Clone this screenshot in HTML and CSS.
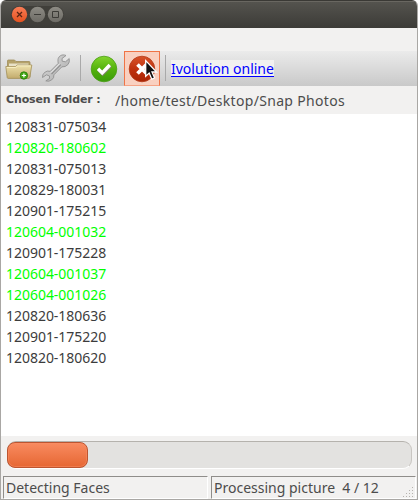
FILE: index.html
```html
<!DOCTYPE html>
<html lang="en">
<head>
<meta charset="utf-8">
<title>Ivolution</title>
<link rel="stylesheet" href="styles.css">
</head>
<body>
<div class="window">
  <header class="titlebar">
    <svg width="56" height="20" viewBox="0 0 56 20">
      <defs>
        <linearGradient id="close" x2="0" y2="1"><stop stop-color="#f97c56"/><stop offset="1" stop-color="#e4521f"/></linearGradient>
        <linearGradient id="gray" x2="0" y2="1"><stop stop-color="#8d8b84"/><stop offset="1" stop-color="#6d6b65"/></linearGradient>
      </defs>
      <rect x=".5" y="1" width="53.500" height="17.500" rx="8.700" fill="#403f3a"/>
      <circle cx="9.500" cy="9.500" r="7.700" fill="url(#close)"/>
      <circle cx="27.500" cy="9.500" r="7.700" fill="url(#gray)"/>
      <circle cx="45.500" cy="9.500" r="7.700" fill="url(#gray)"/>
      <path d="M7 7l5 5M12 7l-5 5" stroke="#5b2413" stroke-width="1.300"/>
      <path d="M24 9.500h7M42.500 6.500h6v6h-6z" stroke="#3c3b37" fill="none"/>
    </svg>
  </header>
  <div class="menubar"></div>
  <nav class="toolbar">
    <svg class="folder" width="28" height="24" viewBox="0 0 28 24">
      <defs>
        <linearGradient id="fold" x2="0" y2="1"><stop stop-color="#efe2ac"/><stop offset="1" stop-color="#c2ab6d"/></linearGradient>
      </defs>
      <path d="M2.500 19V2.800q0-.8.800-.8H9.500l1.500 1.500h13q1 0 1 1V19z" fill="#b5a26a" stroke="#a08e5a" stroke-width=".8"/>
      <path d="M4 5.500h19.500v3H4z" fill="#e9e2c8"/>
      <path d="M.8 8.500h9.700l1.800-1.500h14.500l-2 12.500q-.2.900-1 .9H3.200q-.8 0-1-.9z" fill="url(#fold)" stroke="#a28f58" stroke-width=".8"/>
      <path d="M1.800 9.400h9l1.900-1.500h13" fill="none" stroke="#fbf3cb" stroke-width=".9"/>
      <circle cx="18.900" cy="17.500" r="3.700" fill="#43a915" stroke="#267806" stroke-width=".8"/>
      <path d="M18.900 15.400v4.200M16.800 17.500h4.200" stroke="#fff" stroke-width="1.200"/>
    </svg>
    <svg class="wrench" width="30" height="30" viewBox="0 0 30 30">
      <defs>
        <linearGradient id="steel" x2="1" y2="1"><stop stop-color="#dedede"/><stop offset="1" stop-color="#a8a8a8"/></linearGradient>
      </defs>
      <path d="M25 2.500C21 .8 17.500 3 17 6.500Q16.800 9 17.300 10.300L9.300 18.300Q6 17.300 3.500 19.500 1.200 21.700 1.500 24.500L5.500 21.800 8.500 23 8.500 25.500 4.800 27.900Q8 29 10.800 26.800 13.200 25 12.900 21.800L20.800 13.900Q24.500 14.300 27 11.500 29 9 28.200 5.600L24.500 8.800 21.200 8.200 21 5.500z" fill="url(#steel)" stroke="#919191" stroke-width=".9" stroke-linejoin="round"/>
      <path d="M10.500 21l9.300-9.400" stroke="#8f8f8f" stroke-width="1.200"/>
      <path d="M9.900 19.600l8.800-8.900" stroke="#ededed" stroke-width="1"/>
    </svg>
    <i class="separator first"></i>
    <svg class="apply" width="28" height="28" viewBox="0 0 28 28">
      <defs>
        <linearGradient id="green" x2="0" y2="1"><stop stop-color="#82d42c"/><stop offset=".5" stop-color="#54b20d"/><stop offset="1" stop-color="#3b9b0a"/></linearGradient>
      </defs>
      <circle cx="14" cy="14" r="12.800" fill="url(#green)" stroke="#4b9e17" stroke-width=".8"/>
      <path d="M8 14l4.200 4.200L20 10.200" fill="none" stroke="#a66bb4" stroke-width="3.400" transform="translate(.5 .7)" opacity=".6"/>
      <path d="M8 13.700l4.200 4.200L19.800 10" fill="none" stroke="#fff" stroke-width="3.400"/>
    </svg>
    <div class="stop">
      <svg width="34" height="34" viewBox="0 0 34 34">
        <defs>
          <linearGradient id="red" x2="0" y2="1"><stop stop-color="#d8532a"/><stop offset=".5" stop-color="#bf310d"/><stop offset="1" stop-color="#a92506"/></linearGradient>
        </defs>
        <circle cx="17" cy="17" r="12.800" fill="url(#red)" stroke="#b53a18" stroke-width=".8"/>
        <path d="M12.500 12.500l9 9M21.500 12.500l-9 9" stroke="#fff" stroke-width="3.700"/>
        <path d="M20.700 8.600V24.300L24.200 21l2.600 6.200 2.800-1.200-2.600-6h4.600z" fill="#111" stroke="#fff" stroke-width="1.300"/>
      </svg>
    </div>
    <i class="separator second"></i>
    <a class="link" href="#">Ivolution online</a>
  </nav>
  <div class="chosen"><b>Chosen Folder :</b><span>/home/test/Desktop/Snap Photos</span></div>
  <ul class="list">
    <li>120831-075034</li>
    <li class="found">120820-180602</li>
    <li>120831-075013</li>
    <li>120829-180031</li>
    <li>120901-175215</li>
    <li class="found">120604-001032</li>
    <li>120901-175228</li>
    <li class="found">120604-001037</li>
    <li class="found">120604-001026</li>
    <li>120820-180636</li>
    <li>120901-175220</li>
    <li>120820-180620</li>
  </ul>
  <div class="progress"><div class="trough"><div class="bar"></div></div></div>
  <footer class="status">
    <div class="pane task">Detecting Faces</div>
    <div class="pane count"><span>Processing picture&nbsp; 4 / 12</span>
      <svg width="11" height="11" viewBox="0 0 11 11"><path d="M9 1.500h1M6 4.500h1M9 4.500h1M3 7.500h1M6 7.500h1M9 7.500h1M0 10.500h1M3 10.500h1M6 10.500h1M9 10.500h1" stroke="#b5b2ae"/></svg>
    </div>
  </footer>
</div>
</body>
</html>
```

FILE: styles.css
```css
* { box-sizing: border-box; }
body {
  margin: 0;
  background: #fff;
  font: 14px/21px "Noto Sans", sans-serif;
  color: #4c4c4c;
}
.window {
  width: 418px;
  height: 500px;
  display: flex;
  flex-direction: column;
  border: 1px solid #a9a7a4;
  border-top: 0;
  border-radius: 6px 6px 0 0;
  background: #f2f1f0;
  overflow: hidden;
}
.titlebar {
  height: 28px;
  margin: 0 -1px;
  padding: 5px 0 0 10px;
  background: linear-gradient(#55544f, #3c3b37);
  border-top: 1px solid #3a3935;
  box-shadow: inset 0 1px #696761;
}
.titlebar svg { display: block; margin-top: -1px; }
.menubar { height: 23px; }
.toolbar {
  height: 35px;
  display: flex;
  align-items: flex-start;
  background: linear-gradient(#ebebeb, #c9c9c9);
}
.toolbar svg { display: block; flex: none; }
.folder { margin: 7px 0 0 4px; }
.wrench { margin: 2px 0 0 8px; }
.separator { width: 1px; height: 26px; margin-top: 4px; background: #a9a9a9; }
.first { margin-left: 9px; }
.apply { margin: 4px 0 0 9px; }
.stop {
  width: 36px;
  height: 35px;
  margin-left: 6px;
  border: 1px solid #ef7446;
  border-bottom-color: #f5a486;
  background: #f9d0c0;
}
.second { margin-left: 5px; }
.link {
  height: 17px;
  margin: 9px 0 0 5px;
  line-height: 17px;
  background: #f2f1f0;
  color: #00f;
  text-decoration: none;
  border-bottom: 1px solid #00f;
}
.chosen {
  height: 28px;
  display: flex;
  align-items: flex-start;
  padding-left: 5px;
}
.chosen b { width: 109px; font: bold 11px/28px "DejaVu Sans", sans-serif; letter-spacing: -.13px; }
.chosen span { line-height: 30px; height: 28px; letter-spacing: .32px; }
.list {
  height: 322px;
  margin: 0;
  padding: 2px 5px 0;
  background: #fff;
  color: #3c3c3c;
  letter-spacing: -.03px;
  list-style: none;
}
.list li { height: 21px; }
.list .found { color: #0f0; }
.progress { height: 40px; padding: 5px 5px 0 6px; }
.trough {
  height: 28px;
  border: 1px solid #c9c6c2;
  border-top-color: #b5b2ad;
  border-bottom-color: #fff;
  border-radius: 9px;
  background: #e3e2e0;
}
.bar {
  width: 81px;
  height: 26px;
  margin-left: -1px;
  border: 1px solid #bd5530;
  border-radius: 8px;
  background: linear-gradient(#f98b60, #e66733);
  box-shadow: inset 0 0 0 1px #f98e6680;
}
.status { height: 23px; display: flex; gap: 3px; padding: 0 1px 0 2px; }
.pane {
  height: 23px;
  border: 1px solid #8f8d8a;
  border-right-color: #fff;
  border-bottom-color: #fff;
  padding-left: 2px;
  line-height: 21px;
  white-space: nowrap;
}
.task { width: 205px; }
.count { flex: 1; display: flex; justify-content: space-between; align-items: flex-end; }
.count svg { margin: 0 1px 1px 0; }
```
